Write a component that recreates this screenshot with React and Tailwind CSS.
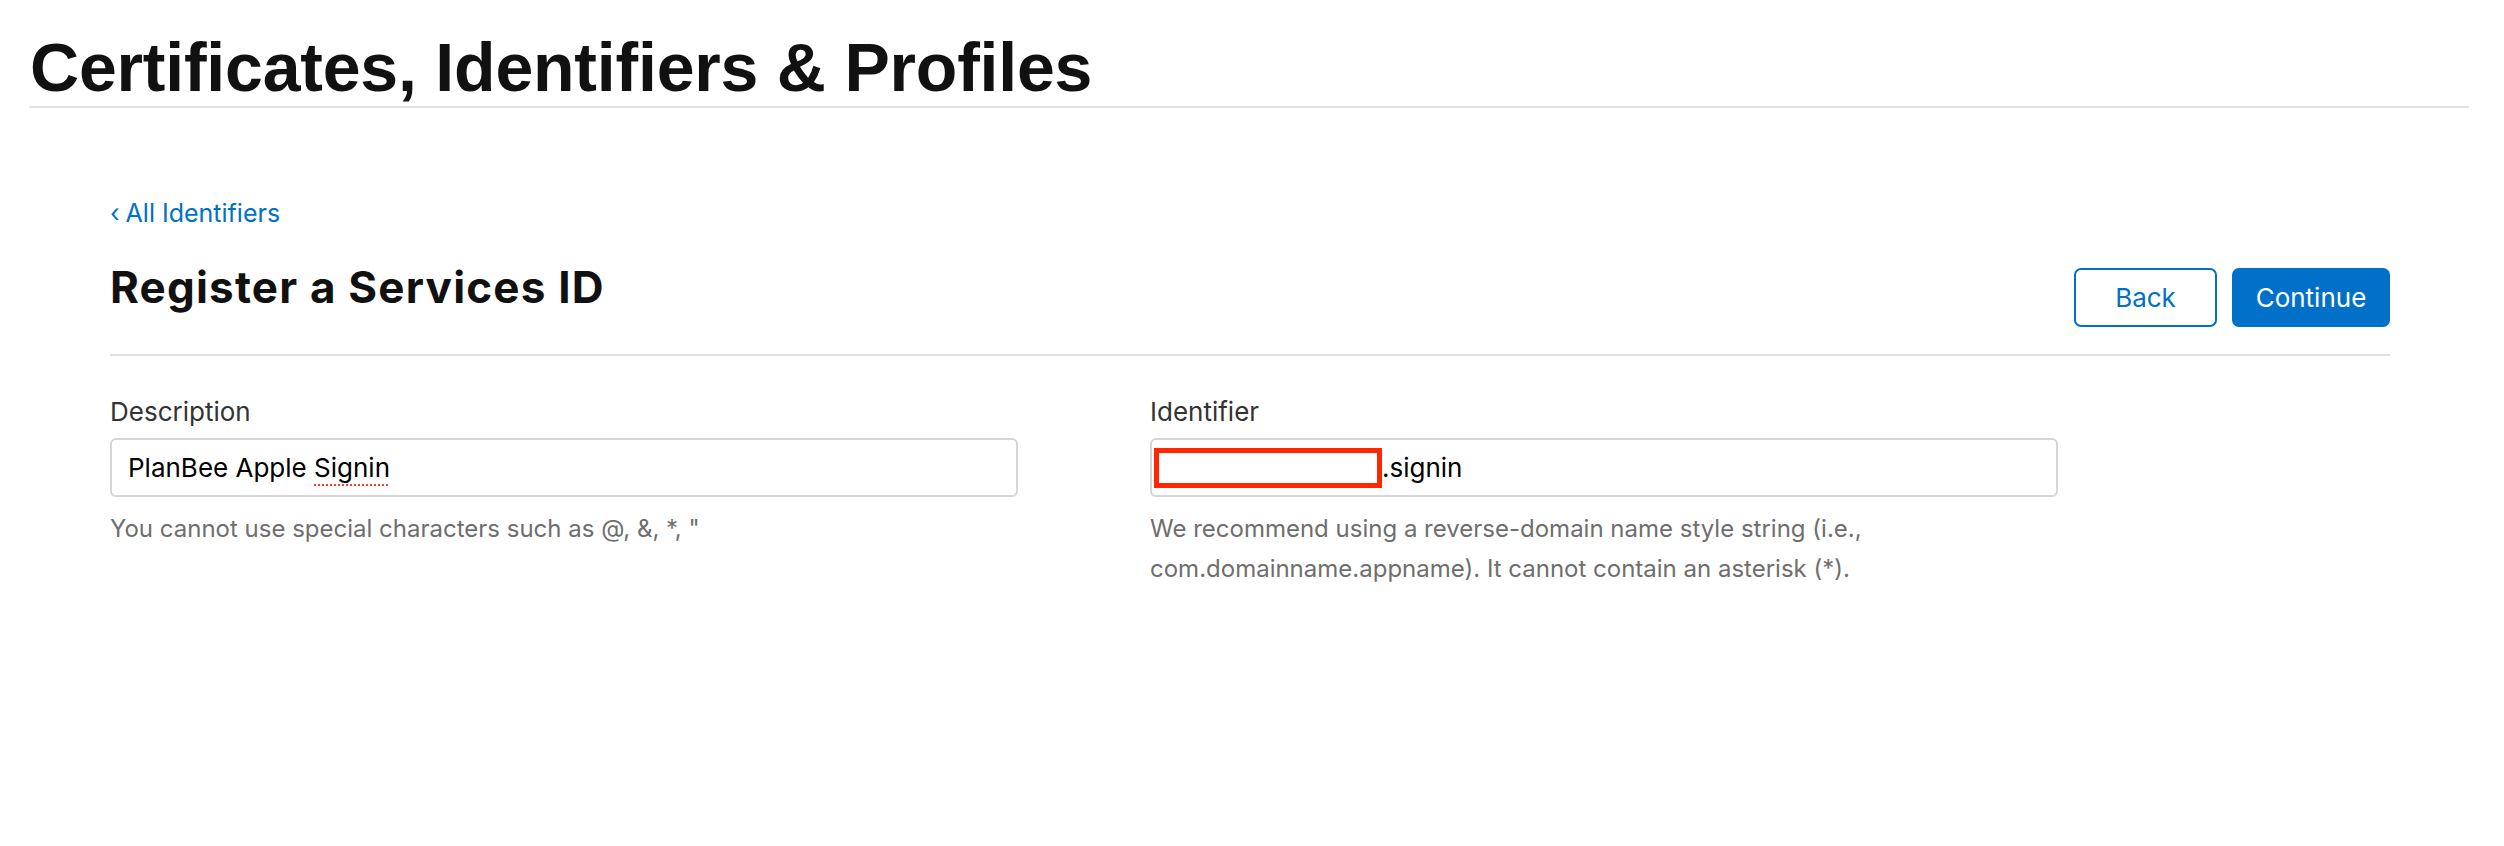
import React from "react";

const sans = "font-['Inter','Noto_Sans',sans-serif]";

const Field = ({ label, children, help }) => (
  <div className="w-[908px]">
    <div className="text-[26px] leading-[32px] text-[#333333]">{label}</div>
    <div className="mt-[10px] h-[59px] border-2 border-[#d6d6d6] rounded-[6px] flex items-center text-[26px] text-black">
      {children}
    </div>
    <p className="mt-[12px] text-[24px] leading-[40px] text-[#6e6e6e]">{help}</p>
  </div>
);

const App = () => {
  return (
    <div className={`w-full h-[846px] bg-white text-[#111111] ${sans}`}>
      {/* Page title */}
      <div className="w-[2440px] ml-[29px] pt-[33px] pb-[5px] border-b-2 border-[#e3e3e3]">
        <h1 className="font-['Liberation_Sans',Arial,sans-serif] font-bold text-[68px] leading-[68px] tracking-[-0.2px] pl-[1px]">
          Certificates, Identifiers &amp; Profiles
        </h1>
      </div>

      <div className="w-[2280px] ml-[110px] mt-[89px]">
        <a href="#" className="block text-[25px] leading-[32px] text-[#0070c9]">
          <span className="mr-[6px]">‹</span>All Identifiers
        </a>

        {/* Heading row */}
        <div className="mt-[33px] flex justify-between items-start pb-[27px] border-b-2 border-[#e0e0e0]">
          <h2 className="text-[44px] leading-[50px] font-bold tracking-[1.2px]">Register a Services ID</h2>
          <div className="mt-[6px] flex gap-[15px]">
            <button className="w-[143px] h-[59px] rounded-[7px] border-2 border-[#0070c9] text-[#0070c9] text-[26px] bg-white">
              Back
            </button>
            <button className="w-[158px] h-[59px] rounded-[7px] bg-[#0070c9] text-white text-[26px]">
              Continue
            </button>
          </div>
        </div>

        {/* Form */}
        <div className="mt-[40px] flex gap-[132px]">
          <Field label="Description" help={'You cannot use special characters such as @, &, *, "'}>
            <span className="pl-[16px]">
              PlanBee Apple{" "}
              <span className="underline decoration-dotted decoration-[#ff3b30] decoration-2 underline-offset-[7px]">Signin</span>
            </span>
          </Field>
          <Field
            label="Identifier"
            help="We recommend using a reverse-domain name style string (i.e., com.domainname.appname). It cannot contain an asterisk (*)."
          >
            <span className="ml-[2px] inline-block w-[228px] h-[40px] border-[5px] border-[#ff2600]" />
            <span>.signin</span>
          </Field>
        </div>
      </div>
    </div>
  );
};

export default App;
